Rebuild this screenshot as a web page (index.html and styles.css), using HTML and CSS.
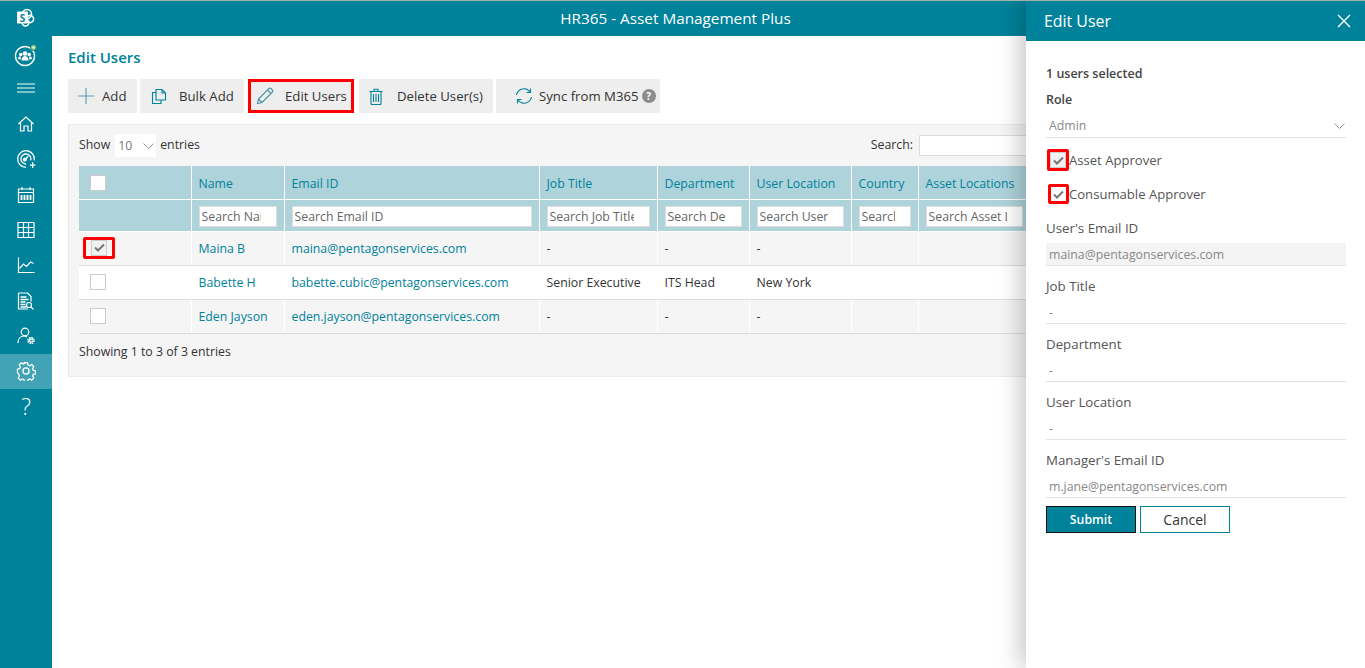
FILE: index.html
```html
<!DOCTYPE html>
<html lang="en">
<head>
<meta charset="utf-8">
<title>Edit Users</title>
<link rel="stylesheet" href="styles.css">
</head>
<body>
<div class="app">
  <aside class="sidebar">
    <div class="side-logo">
      <svg width="20" height="20" viewBox="0 0 20 20"><circle cx="12" cy="6" r="4.5" fill="none" stroke="#fff" stroke-width="1.6"/><circle cx="15" cy="11" r="3.6" fill="none" stroke="#fff" stroke-width="1.6"/><circle cx="10.5" cy="14.5" r="3.4" fill="none" stroke="#fff" stroke-width="1.6"/><rect x="2" y="3.5" width="11" height="12" rx="1" fill="#fff"/><text x="7.5" y="13.5" class="logo-s">S</text></svg>
    </div>
    <div class="side-users">
      <svg width="24" height="24" viewBox="0 0 24 24"><circle cx="11" cy="13" r="9.6" fill="none" stroke="#fff" stroke-width="1.5"/><circle cx="11" cy="10.5" r="2.3" fill="#fff"/><circle cx="6.8" cy="11.5" r="1.8" fill="#fff"/><circle cx="15.2" cy="11.5" r="1.8" fill="#fff"/><path d="M7.500 17.500c0-3 1.500-4.500 3.500-4.500s3.500 1.500 3.500 4.500z" fill="#fff"/><path d="M4 16c0-2 1-2.800 2.500-2.800l.5 3.300zM18 16c0-2-1-2.800-2.500-2.800l-.5 3.300z" fill="#fff"/><circle cx="19.500" cy="4.500" r="3" fill="#8fce8f" stroke="#0a7f6e"/><circle cx="19.500" cy="4.500" r="1" fill="#fff"/></svg>
    </div>
    <div class="side-menu">
      <svg width="20" height="10" viewBox="0 0 20 10"><path d="M1 1h18M1 5h18M1 9h18" stroke="#fff" stroke-width="1"/></svg>
    </div>
    <nav class="side-nav">
      <a class="nav-item"><svg width="18" height="18" viewBox="0 0 18 18" class="ico"><path d="M1.500 9 9 2l7.500 7M3.500 8v8h3.500v-5h4v5h3.500V8"/></svg></a>
      <a class="nav-item"><svg width="20" height="20" viewBox="0 0 18 18" class="ico"><path d="M9 16.500a7.500 7.500 0 1 1 7.400-6.300"/><path d="M9 13.500a4.500 4.500 0 1 1 4.300-3.300"/><path d="m7.500 10 3.500-3.500M12.500 14.500h5M15 12v5"/><circle cx="8" cy="9.500" r="1.200" fill="#fff"/></svg></a>
      <a class="nav-item"><svg width="18" height="18" viewBox="0 0 18 18" class="ico"><path d="M1.500 3h15v13.500h-15zM1.500 6.500h15M5 1v3M13 1v3"/><path d="M4.500 9v5M7.500 9v5M10.500 9v5M13.500 9v5" stroke-width="1.800"/></svg></a>
      <a class="nav-item"><svg width="18" height="18" viewBox="0 0 18 18" class="ico"><path d="M1 1.500h16v15H1zM1 6.500h16M1 11.500h16M6.500 1.500v15M11.500 1.500v15"/></svg></a>
      <a class="nav-item"><svg width="18" height="18" viewBox="0 0 18 18" class="ico"><path d="M1.500 1.500v15h16"/><path d="m2.500 12.500 4-4.500 3 2.500 4-4.500 3 1.500"/></svg></a>
      <a class="nav-item"><svg width="18" height="18" viewBox="0 0 18 18" class="ico"><path d="M1.500 1h9l3.500 3.500v5M11 17H1.500V1"/><path d="M3.500 5h6M3.500 7.500h8M3.500 10h5M3.500 12.500h5M3.500 15h6" stroke-width="1.300"/><circle cx="12" cy="13" r="2.500"/><path d="m14 15 2.500 2.500"/></svg></a>
      <a class="nav-item"><svg width="18" height="18" viewBox="0 0 18 18" class="ico"><circle cx="8" cy="5" r="3.800"/><path d="M1 16c0-4.500 2.800-7 6-7 1.200 0 2 .3 3 .9"/><circle cx="14" cy="13.500" r="1.800" stroke-width="2.200" stroke-dasharray="1.500 .5"/><circle cx="14" cy="13.500" r="3.200" stroke-width="1.200" stroke-dasharray="1.500 1"/></svg></a>
      <a class="nav-item nav-active"><svg width="20" height="20" viewBox="0 0 18 18" class="ico"><circle cx="9" cy="9" r="2.800"/><path d="M7.500 1h3l.5 2.300 1.700.8 2-1.200 2 2.100-1.200 2 .7 1.700 2.300.5v3l-2.300.4-.7 1.700 1.200 2-2 2.100-2-1.200-1.700.7-.5 2.300h-3l-.5-2.300-1.700-.7-2 1.200-2-2.100 1.200-2-.7-1.700L.5 10.500v-3l2.300-.5.700-1.700-1.200-2 2-2.100 2 1.200 1.700-.8z" transform="translate(.8 .5) scale(.91)"/></svg></a>
      <a class="nav-item nav-help">?</a>
    </nav>
  </aside>

  <div class="main-col">
    <header class="topbar">HR365 - Asset Management Plus</header>
    <main class="content">
      <h1 class="page-title">Edit Users</h1>
      <div class="toolbar">
        <button class="tool tool-add"><svg width="18" height="18" viewBox="0 0 18 18" class="tico"><path d="M9 1v16M1 9h16"/></svg>Add</button>
        <button class="tool tool-bulk"><svg width="16" height="17" viewBox="0 0 16 17" class="tico"><path d="M5 1.500h6l3.500 3.500v7H5zM11 1.500V5h3.500"/><path d="M5 4.500H1.500V15.500H10V12"/></svg>Bulk Add</button>
        <button class="tool tool-edit"><svg width="18" height="18" viewBox="0 0 18 18" class="tico"><path d="M1.500 16.500 2.500 12 13 1.500a1.500 1.500 0 0 1 2 0l1.500 1.500a1.500 1.500 0 0 1 0 2L6 15.500zM2.500 12 6 15.500M11.500 3 15 6.500"/></svg>Edit Users</button>
        <button class="tool tool-del"><svg width="14" height="17" viewBox="0 0 14 17" class="tico"><path d="M.5 3.500h13M2 3.500V15.500a1 1 0 0 0 1 1h8a1 1 0 0 0 1-1V3.500M5 3.500V1.200h4v2.300M4.500 6v8M7 6v8M9.500 6v8"/></svg>Delete User(s)</button>
        <button class="tool tool-sync"><svg width="18" height="18" viewBox="0 0 18 18" class="tico"><path d="M1.500 8A7.500 7.500 0 0 1 15 5M16.500 10A7.500 7.500 0 0 1 3 13"/><path d="M15.500 1.500V5.500H11.500M2.500 16.500V12.500H6.500"/></svg>Sync from M365<span class="help-dot">?</span></button>
      </div>

      <section class="panel">
        <div class="panel-top">
          <div class="length">Show <span class="length-select">10<svg width="11" height="6" viewBox="0 0 11 6"><path d="m.5.500 5 5 5-5" fill="none" stroke="#888" stroke-width=".9"/></svg></span> entries</div>
          <div class="search">Search: <span class="search-box"></span></div>
        </div>
        <table class="grid">
          <colgroup>
            <col class="c-check"><col class="c-name"><col class="c-email"><col class="c-job"><col class="c-dept"><col class="c-loc"><col class="c-country"><col class="c-asset">
          </colgroup>
          <thead>
            <tr class="head-row">
              <th class="cell-check"><span class="cb cb-head"></span></th>
              <th>Name</th><th>Email ID</th><th>Job Title</th><th>Department</th><th>User Location</th><th>Country</th><th>Asset Locations</th>
            </tr>
            <tr class="filter-row">
              <th></th>
              <th><input class="filter" placeholder="Search Name"></th>
              <th><input class="filter" placeholder="Search Email ID"></th>
              <th><input class="filter" placeholder="Search Job Title"></th>
              <th><input class="filter" placeholder="Search Department"></th>
              <th><input class="filter" placeholder="Search User Location"></th>
              <th><input class="filter" placeholder="Search Country"></th>
              <th><input class="filter filter-asset" placeholder="Search Asset Locations"></th>
            </tr>
          </thead>
          <tbody>
            <tr class="odd">
              <td class="cell-check"><span class="red-box red-row"><span class="cb cb-on"><svg width="11" height="9" viewBox="0 0 11 9"><path d="m1 4.500 3 3 6-6" fill="none" stroke="#777" stroke-width="2"/></svg></span></span></td>
              <td class="link">Maina B</td><td class="link">maina@pentagonservices.com</td><td>-</td><td>-</td><td>-</td><td></td><td></td>
            </tr>
            <tr class="even">
              <td class="cell-check"><span class="cb"></span></td>
              <td class="link">Babette H</td><td class="link">babette.cubic@pentagonservices.com</td><td>Senior Executive</td><td>ITS Head</td><td>New York</td><td></td><td></td>
            </tr>
            <tr class="odd">
              <td class="cell-check"><span class="cb"></span></td>
              <td class="link">Eden Jayson</td><td class="link">eden.jayson@pentagonservices.com</td><td>-</td><td>-</td><td>-</td><td></td><td></td>
            </tr>
          </tbody>
        </table>
        <p class="info">Showing 1 to 3 of 3 entries</p>
      </section>
    </main>
  </div>

  <aside class="drawer">
    <header class="drawer-head">
      <span class="drawer-title">Edit User</span>
      <svg width="14" height="14" viewBox="0 0 14 14"><path d="m1 1 12 12M13 1 1 13" stroke="#fff" stroke-width="1.400"/></svg>
    </header>
    <form class="drawer-body">
      <div class="selected">1 users selected</div>
      <div class="role-label">Role</div>
      <div class="value value-select">Admin<svg width="11" height="6" viewBox="0 0 11 6"><path d="m.5.500 5 5 5-5" fill="none" stroke="#888" stroke-width=".9"/></svg></div>
      <label class="check-line check-a"><span class="red-box"><span class="cb cb-on"><svg width="11" height="9" viewBox="0 0 11 9"><path d="m1 4.500 3 3 6-6" fill="none" stroke="#777" stroke-width="2"/></svg></span></span>Asset Approver</label>
      <label class="check-line check-b"><span class="red-box"><span class="cb cb-on cb-plain"><svg width="11" height="9" viewBox="0 0 11 9"><path d="m1 4.500 3 3 6-6" fill="none" stroke="#777" stroke-width="2"/></svg></span></span>Consumable Approver</label>
      <div class="field field-first"><div class="label">User's Email ID</div><div class="value value-disabled">maina@pentagonservices.com</div></div>
      <div class="field"><div class="label">Job Title</div><div class="value">-</div></div>
      <div class="field"><div class="label">Department</div><div class="value">-</div></div>
      <div class="field"><div class="label">User Location</div><div class="value">-</div></div>
      <div class="field"><div class="label">Manager's Email ID</div><div class="value">m.jane@pentagonservices.com</div></div>
      <div class="actions">
        <button type="button" class="btn-submit">Submit</button>
        <button type="button" class="btn-cancel">Cancel</button>
      </div>
    </form>
  </aside>
</div>
</body>
</html>
```

FILE: styles.css
```css
* { box-sizing: border-box; }
html, body { margin: 0; height: 100%; overflow: hidden; }
body {
  font-family: "Open Sans", "Noto Sans", "Liberation Sans", sans-serif;
  font-size: 12.3px;
  color: #333;
  background: #fff;
}
.app { position: relative; display: flex; height: 668px; width: 1365px; overflow: hidden; border-top: 1px solid #9fb3a8; }

/* sidebar */
.sidebar { width: 52px; flex: none; background: #00829b; display: flex; flex-direction: column; align-items: stretch; }
.side-logo { height: 33px; display: flex; align-items: center; justify-content: center; padding-right: 2px; }
.logo-s { font: bold 10px "Open Sans", sans-serif; fill: #00829b; text-anchor: middle; }
.side-users { height: 36px; margin-top: 3px; display: flex; align-items: center; justify-content: center; }
.side-menu { height: 30px; display: flex; align-items: center; justify-content: center; }
.side-nav { display: flex; flex-direction: column; padding-top: 3.500px; }
.nav-item { height: 35.300px; display: flex; align-items: center; justify-content: center; }
.nav-active { background: #43a3b6; }
.nav-help { color: #fff; font-size: 23px; font-family: "Open Sans", sans-serif; font-weight: 300; padding-bottom: 2px; }
.ico { fill: none; stroke: #fff; stroke-width: 1.200; }

/* main */
.main-col { flex: 1; min-width: 0; display: flex; flex-direction: column; }
.topbar { height: 35px; flex: none; background: #00829b; color: #fff; font-size: 15.300px; display: flex; align-items: center; justify-content: center; padding: 0 66px 2px 0; }
.content { padding: 0 16px; flex: 1; }
.page-title { margin: 12px 0 0; height: 18px; line-height: 18px; font-size: 15px; font-weight: 600; color: #00829b; }
.toolbar { display: flex; margin-top: 13px; height: 34px; }
.tool { height: 34px; border: 0; background: #eee; color: #333; font: inherit; font-size: 13.200px; display: flex; align-items: center; padding: 0; white-space: nowrap; }
.tico { fill: none; stroke: #00829b; stroke-width: 1.100; flex: none; }
.tool-add { width: 69px; padding-left: 9px; margin-right: 3px; }
.tool-add .tico { margin-right: 7px; stroke: #5a9fb0; }
.tool-bulk { width: 104px; padding-left: 11px; margin-right: 4px; }
.tool-bulk .tico { margin-right: 12px; }
.tool-edit { width: 106px; padding-left: 5px; margin-right: 5px; border: 3px solid #f00; }
.tool-edit .tico { margin-right: 11px; stroke: #4a93a8; }
.tool-del { width: 134px; padding-left: 10px; margin-right: 3px; }
.tool-del .tico { margin-right: 14px; }
.tool-sync { width: 164px; padding-left: 19px; }
.tool-sync .tico { margin-right: 6px; }
.help-dot { width: 14px; height: 14px; margin-left: 3px; border-radius: 50%; background: #8c8c8c; color: #fff; font-size: 10px; font-weight: 700; line-height: 14px; text-align: center; flex: none; }

.panel { margin-top: 11px; width: 1285px; height: 253px; background: #f5f5f5; border: 1px solid #eaeaea; padding: 0 10px; }
.panel-top { height: 41px; padding-bottom: 2px; display: flex; justify-content: space-between; align-items: center; }
.length { display: flex; align-items: center; }
.length-select { width: 41px; height: 23px; margin: 2px 4px 0 5px; background: #fff; color: #777; display: flex; align-items: center; justify-content: space-between; padding: 0 2px 0 3px; }
.search { display: flex; align-items: center; gap: 6px; margin-right: 8px; }
.search-box { width: 415px; height: 21px; background: #fff; border: 1px solid #ddd; margin-top: 1px; }

.grid { table-layout: fixed; width: 1263px; border-collapse: collapse; }
.c-check { width: 112px; } .c-name { width: 93px; } .c-email { width: 255px; } .c-job { width: 118px; }
.c-dept { width: 92px; } .c-loc { width: 102px; } .c-country { width: 67px; } .c-asset { width: 424px; }
.grid th, .grid td { border-right: 1px solid #fff; padding: 0 7px; text-align: left; font-weight: 400; white-space: nowrap; overflow: hidden; }
.grid .head-row th { height: 33px; background: #aed3da; color: #00829b; border-bottom: 1px solid #fff; padding-top: 2px; }
.grid .filter-row th { height: 32px; background: #aed3da; border-bottom: 1px solid #fff; padding: 2px 7px 0; }
.filter { display: block; width: 100%; height: 21px; background: #fff; border: 1px solid #ddd; padding: 0 15px 0 2px; font: inherit; color: #666; border-radius: 0; outline: none; }
.filter::placeholder { color: #666; opacity: 1; }
.filter-asset { width: 97px; }
.grid tbody td { height: 34px; border-bottom: 1px solid #ddd; }
.odd td { background: #f5f5f5; }
.even td { background: #fff; }
.grid .link { color: #00829b; }
.grid .head-row .cell-check, .grid tbody .cell-check { padding: 0 0 1px 11px; }
.cb { display: inline-flex; width: 16px; height: 16px; background: #fff; border: 1px solid #ccc; align-items: center; justify-content: center; vertical-align: middle; }
.cb-on { background: #f1f1f1; }
.red-box { display: inline-flex; align-items: center; justify-content: center; border: 3px solid #f00; border-radius: 2px; width: 22px; height: 22px; vertical-align: middle; }
.red-row { width: 32px; margin-left: -7px; }
.info { margin: 10px 0 0; line-height: 16px; }

/* drawer */
.drawer { position: absolute; top: -1px; right: 0; bottom: 0; width: 339px; background: #fff; box-shadow: -6px 0 22px rgba(0,0,0,.22); }
.drawer-head { height: 41px; background: #00829b; color: #fff; display: flex; align-items: center; justify-content: space-between; padding: 1px 14px 0 18px; }
.drawer-title { font-size: 15.900px; }
.drawer-body { padding: 25px 19px 0 20px; display: flex; flex-direction: column; color: #444; }
.selected { line-height: 16px; font-weight: 600; font-size: 12.500px; }
.role-label { line-height: 16px; margin-top: 10px; font-weight: 600; font-size: 12.500px; }
.value { height: 24px; line-height: 23px; padding: 0 3px; border-bottom: 1px solid #e2e2e2; color: #888; display: flex; align-items: center; justify-content: space-between; }
.value-select { margin-top: 6px; padding-right: 1px; height: 24px; }
.value-disabled { background: #f4f4f4; }
.check-line { display: flex; align-items: center; font-size: 13.100px; color: #555; height: 22px; }
.check-a { margin-top: 11px; margin-left: 1px; }
.check-b { margin-top: 12px; margin-left: 2px; }
.check-b .red-box { width: 21px; height: 20px; }
.cb-plain { border: 0; background: transparent; }
.field { margin-top: 11px; }
.field-first { margin-top: 14px; }
.label { line-height: 18px; font-size: 13.300px; color: #555; }
.field .value { margin-top: 6px; height: 23px; }
.actions { display: flex; gap: 4px; margin-top: 8px; }
.btn-submit { width: 90px; height: 27px; background: #00829b; color: #fff; border: 1px solid #111; font: inherit; font-weight: 600; }
.btn-cancel { width: 90px; height: 27px; background: #fff; color: #333; border: 1px solid #00829b; font: inherit; font-size: 14px; }
```
